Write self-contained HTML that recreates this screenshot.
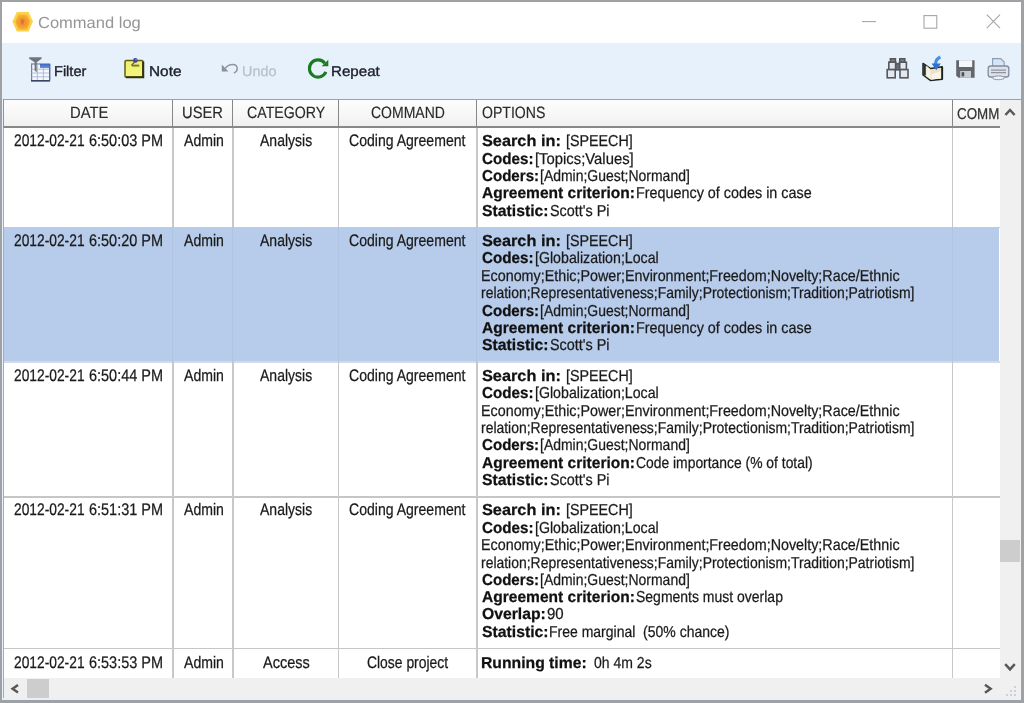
<!DOCTYPE html>
<html lang="en">
<head>
<meta charset="utf-8">
<title>Command log</title>
<style>
html,body{margin:0;padding:0;}
body{width:1024px;height:703px;overflow:hidden;background:#a0a1a5;font-family:"Liberation Sans",sans-serif;}
#win{position:absolute;left:0;top:0;width:1024px;height:703px;background:#a0a1a5;overflow:hidden;}
#inner{position:absolute;left:2.1px;top:1.8px;width:1019.4px;height:697.9px;background:#e7f1fb;}
#title{position:absolute;left:2.1px;top:1.8px;width:1019.4px;height:41px;background:#fff;}
#toolbar{position:absolute;left:2.1px;top:42.6px;width:1019.4px;height:57px;background:#e7f1fb;}
#grid{position:absolute;left:3px;top:98.6px;width:1017.6px;height:599px;background:#fff;}
#gridtop{position:absolute;left:3px;top:98.6px;width:1018.2px;height:1.8px;background:#97a1af;}
#gridleft{position:absolute;left:3px;top:98.6px;width:1.3px;height:599px;background:#a4acb8;}
#header{position:absolute;left:4.3px;top:100px;width:995.7px;height:26.7px;background:linear-gradient(#fdfdfd,#f7f7f7 55%,#efefef);}
#hline{position:absolute;left:4.3px;top:126.4px;width:995.7px;height:1.35px;background:#888;}
.hd{position:absolute;top:100px;width:1.2px;height:27px;background:#878787;}
.cd{position:absolute;top:127.8px;width:1.3px;height:550.6px;background:#c8c8c8;}
.rl{position:absolute;left:4.3px;width:995.7px;height:1.2px;background:#c6c6c6;}
#sel{position:absolute;left:4.3px;top:227.3px;width:994.5px;height:134.4px;background:#b7cbea;}
.sd{position:absolute;top:227.3px;width:1.1px;height:134.4px;background:#b1c4e1;}
#vsb{position:absolute;left:1000px;top:100.1px;width:20.7px;height:578.3px;background:#f0f0f0;}
#hsb{position:absolute;left:4.3px;top:678.4px;width:1016.4px;height:19.3px;background:#f0f0f0;}
#vth{position:absolute;left:1000.3px;top:540px;width:19.5px;height:22.4px;background:#cdcdcd;}
#hth{position:absolute;left:27.4px;top:679.2px;width:21.8px;height:18.4px;background:#cdcdcd;}
.t{position:absolute;white-space:pre;transform-origin:0 0;font-family:"Liberation Sans",sans-serif;-webkit-text-stroke:0.25px currentColor;text-rendering:geometricPrecision;}
.b{font-weight:bold;}
svg{position:absolute;overflow:visible;}
</style>
</head>
<body>
<div id="win">
<div id="inner"></div>
<div id="title"></div>
<div id="toolbar"></div>
<div id="grid"></div>
<div id="header"></div>
<div id="sel"></div>
<!-- row lines -->
<div class="rl" style="top:361.4px;background:#d5dbe6"></div>
<div class="rl" style="top:496.4px"></div>
<div class="rl" style="top:648.3px"></div>
<div class="rl" style="top:226.6px;background:#c4cad6"></div>
<!-- column dividers body -->
<div class="cd" style="left:172.4px"></div>
<div class="cd" style="left:232.4px"></div>
<div class="cd" style="left:337.6px"></div>
<div class="cd" style="left:476.4px"></div>
<div class="cd" style="left:952px"></div>
<div class="sd" style="left:172.4px"></div>
<div class="sd" style="left:232.4px"></div>
<div class="sd" style="left:337.6px"></div>
<div class="sd" style="left:476.4px"></div>
<div class="sd" style="left:952px"></div>
<div id="hline"></div>
<div class="hd" style="left:172.3px"></div>
<div class="hd" style="left:232.3px"></div>
<div class="hd" style="left:337.5px"></div>
<div class="hd" style="left:476.3px"></div>
<div class="hd" style="left:951.9px"></div>
<div id="vsb"></div>
<div id="hsb"></div>
<div id="vth"></div>
<div id="hth"></div>
<div id="gridtop"></div>
<div id="gridleft"></div>
<div class="hd" style="left:3px;top:99px;height:28.6px;width:1.3px;background:#8f9297"></div>
<svg width="1024" height="703" viewBox="0 0 1024 703" style="left:0;top:0">
<defs>
<radialGradient id="hexg" cx="0.5" cy="0.52" r="0.55">
<stop offset="0" stop-color="#ee8a3a"/><stop offset="0.5" stop-color="#f39c28"/><stop offset="0.85" stop-color="#f7b032"/><stop offset="1" stop-color="#f9bc3a"/>
</radialGradient>
<filter id="bl" x="-20%" y="-20%" width="140%" height="140%"><feGaussianBlur stdDeviation="0.45"/></filter>
<filter id="bl2" x="-20%" y="-20%" width="140%" height="140%"><feGaussianBlur stdDeviation="0.3"/></filter>
<linearGradient id="tblg" x1="0" y1="0" x2="0" y2="1"><stop offset="0" stop-color="#3d66c2"/><stop offset="1" stop-color="#6d93dc"/></linearGradient>
<linearGradient id="noteg" x1="0" y1="0" x2="0" y2="1"><stop offset="0" stop-color="#eeee6a"/><stop offset="1" stop-color="#f6f680"/></linearGradient>
</defs>
<!-- app icon -->
<polygon filter="url(#bl)" points="12.4,21.6 16.8,11.9 28.6,11.9 33,21.6 28.6,31.4 16.8,31.4" fill="#fcd24c"/>
<polygon filter="url(#bl)" points="15.2,21.7 18.2,14.4 27.2,14.4 30.2,21.7 27.2,29.6 18.2,29.6" fill="url(#hexg)"/>
<path filter="url(#bl)" d="M21.4 19.4L22.4 24.4L23.6 19.4" stroke="#e66a4a" stroke-width="1.6" fill="none"/>
<!-- window controls -->
<g stroke="#a6a6a6" stroke-width="1.1" fill="none">
<path d="M862 21.6H876"/>
<rect x="924" y="15.6" width="12.8" height="12.6"/>
<path d="M986.8 14.6L1000 28.2M1000 14.6L986.8 28.2"/>
</g>
<!-- filter icon -->
<g filter="url(#bl2)">
<rect x="31.6" y="64" width="18" height="16.6" fill="#f4f7fb" stroke="#6c7fa6" stroke-width="1.2"/>
<rect x="40" y="64" width="9.6" height="4" fill="url(#tblg)"/>
<path d="M31.6 69.2H49.6M31.6 73H49.6M31.6 76.8H49.6M37.4 64V80.6M43.4 68V80.6" stroke="#aab8d4" stroke-width="0.9" fill="none"/>
<path d="M31 80.8H50" stroke="#3a4766" stroke-width="1.6"/>
<path d="M49.7 64V80.6" stroke="#54689a" stroke-width="1.2"/>
<path d="M29.2 57.3H41.6V58.8L36.7 62.2V72.2L34.6 70.6V62.2L29.2 58.8Z" fill="#70747c"/>
</g>
<!-- note icon -->
<g filter="url(#bl2)">
<rect x="125" y="60.6" width="18" height="16.6" rx="1.2" fill="url(#noteg)" stroke="#5e5e1e" stroke-width="1.5"/>
<path d="M143.2 61.5V77.2H126" stroke="#30300e" stroke-width="2.1" fill="none"/>
<path d="M131.4 65.4L134.6 62.2" stroke="#50502a" stroke-width="1.2"/>
<path d="M132 65.6H139.2" stroke="#77773a" stroke-width="1.9"/>
<circle cx="135.4" cy="60.4" r="2.3" fill="#3e3c9c"/>
<circle cx="136" cy="59.8" r="0.8" fill="#9a98e0"/>
</g>
<!-- undo icon -->
<g filter="url(#bl2)">
<path d="M221.8 64.6V71.6H228.4Z" fill="#8b9098"/>
<path d="M225.4 68.2C227.5 65.6 230.2 64.6 232.6 64.6C235.6 64.6 237.2 66.4 237.2 68.6C237.2 70.8 235.8 72.4 233.8 73" fill="none" stroke="#9096a0" stroke-width="1.5"/>
</g>
<!-- repeat icon -->
<g filter="url(#bl2)">
<path d="M325.9 71.9A8.6 8.6 0 1 1 324.8 63.2" fill="none" stroke="#1f7a24" stroke-width="3.1"/>
<path d="M328.3 59.8V66.2H321.6Z" fill="#1f7a24"/>
</g>
<!-- binoculars -->
<g filter="url(#bl2)" stroke="#54585e" stroke-width="1.6" fill="#e4e8ee">
<rect x="890.4" y="58.8" width="5" height="3.6" fill="#7c8088"/>
<rect x="899.8" y="58.8" width="5" height="3.6" fill="#7c8088"/>
<rect x="888.8" y="62.2" width="7" height="7.4"/>
<rect x="899.4" y="62.2" width="7" height="7.4"/>
<rect x="887.2" y="69.6" width="8" height="8.2"/>
<rect x="900" y="69.6" width="8" height="8.2"/>
<rect x="895.6" y="63.8" width="4" height="6" fill="#6a6e76"/>
</g>
<!-- book with arrow -->
<g filter="url(#bl2)">
<path d="M923 63.4L930.6 68.6L942.2 66.8V79.2L930.4 80.4L923 75Z" fill="#e9dfc6" stroke="#1c2624" stroke-width="1.5" stroke-linejoin="round"/>
<path d="M923.2 63.6L925.8 64.2V75.6L923.2 74.8Z" fill="#2a3432"/>
<path d="M926.4 65.4L930.6 69.4V79.4L926.4 76.2Z" fill="#f6f1e2"/>
<path d="M931.4 69.8L941.2 68V78.2L931.4 79.4Z" fill="#efe2c4"/>
<path d="M931.4 74.5L941.2 71V78.2L931.4 79.4Z" fill="#f7f3ea"/>
<path d="M942.2 66.8V79.4" stroke="#16201e" stroke-width="1.8"/>
<path d="M940.4 57C937.6 58.2 935.6 60.6 935.4 64.2" fill="none" stroke="#4a8fe2" stroke-width="3.2"/>
<path d="M931.6 63.6H940.8L936.3 70.2Z" fill="#2f6fcf"/>
</g>
<!-- floppy -->
<g filter="url(#bl2)">
<path d="M956.2 60.2H974.6V77.8H958.4L956.2 75.6Z" fill="#62666c"/>
<rect x="959" y="60.2" width="13.2" height="6.8" fill="#f4f6fa"/>
<rect x="960.2" y="71" width="10.8" height="6.8" fill="#c9cbcf"/>
<rect x="961.6" y="72.2" width="2.6" height="4.2" fill="#4a4e54"/>
</g>
<!-- printer -->
<g filter="url(#bl2)">
<path d="M992.6 58.6H1000.6L1004.2 62V67H992.6Z" fill="#d3e6f8" stroke="#8e9cae" stroke-width="1.1"/>
<rect x="988.2" y="66" width="20.6" height="11" rx="2.6" fill="#dfe2e8" stroke="#808c9e" stroke-width="1.3"/>
<path d="M991 70.2H1006M991 72.6H1006" stroke="#8f959e" stroke-width="1.2"/>
<ellipse cx="998.5" cy="77.8" rx="6" ry="1.9" fill="#eef3fa" stroke="#8c97a8" stroke-width="1"/>
</g>
<!-- scroll arrows -->
<g fill="none" stroke="#585858" stroke-width="2.5" filter="url(#bl2)">
<path d="M1005.4 115L1010 110L1014.6 115"/>
<path d="M1005.2 664.2L1010 669.4L1014.8 664.2"/>
<path d="M18 685L12.6 688.8L18 692.6"/>
<path d="M985 684.8L990.6 688.8L985 692.8"/>
</g>
<!-- size grip -->
<g fill="#cfcfcf">
<rect x="1014" y="686" width="2" height="2"/>
<rect x="1010" y="690" width="2" height="2"/><rect x="1014" y="690" width="2" height="2"/>
<rect x="1006" y="694" width="2" height="2"/><rect x="1010" y="694" width="2" height="2"/><rect x="1014" y="694" width="2" height="2"/>
</g>
</svg>

<span class="t" style="left:69.59px;top:103px;font-size:16.4px;line-height:20px;color:#2a2a2a;transform:scaleX(0.9023);-webkit-text-stroke:0.15px #2a2a2a;">DATE</span>
<span class="t" style="left:182.26px;top:103px;font-size:16.4px;line-height:20px;color:#2a2a2a;transform:scaleX(0.8984);-webkit-text-stroke:0.15px #2a2a2a;">USER</span>
<span class="t" style="left:246.78px;top:103px;font-size:16.4px;line-height:20px;color:#2a2a2a;transform:scaleX(0.8647);-webkit-text-stroke:0.15px #2a2a2a;">CATEGORY</span>
<span class="t" style="left:371.19px;top:103px;font-size:16.4px;line-height:20px;color:#2a2a2a;transform:scaleX(0.8541);-webkit-text-stroke:0.15px #2a2a2a;">COMMAND</span>
<span class="t" style="left:481.83px;top:103px;font-size:16.4px;line-height:20px;color:#2a2a2a;transform:scaleX(0.8581);-webkit-text-stroke:0.15px #2a2a2a;">OPTIONS</span>
<span class="t" style="left:956.52px;top:105px;font-size:15.7px;line-height:20px;color:#333;transform:scaleX(0.8511);">COMM</span>
<span class="t" style="left:13.91px;top:131px;font-size:16.7px;line-height:20px;color:#1a1a1a;transform:scaleX(0.8266);">2012-02-21</span>
<span class="t" style="left:89.46px;top:131px;font-size:16.7px;line-height:20px;color:#1a1a1a;transform:scaleX(0.8672);">6:50:03 PM</span>
<span class="t" style="left:184.37px;top:131px;font-size:16.7px;line-height:20px;color:#1a1a1a;transform:scaleX(0.8442);">Admin</span>
<span class="t" style="left:259.97px;top:131px;font-size:16.7px;line-height:20px;color:#1a1a1a;transform:scaleX(0.8390);">Analysis</span>
<span class="t" style="left:349.29px;top:131px;font-size:16.7px;line-height:20px;color:#1a1a1a;transform:scaleX(0.8422);">Coding Agreement</span>
<span class="t" style="left:13.91px;top:231px;font-size:16.7px;line-height:20px;color:#1a1a1a;transform:scaleX(0.8266);">2012-02-21</span>
<span class="t" style="left:89.46px;top:231px;font-size:16.7px;line-height:20px;color:#1a1a1a;transform:scaleX(0.8672);">6:50:20 PM</span>
<span class="t" style="left:184.37px;top:231px;font-size:16.7px;line-height:20px;color:#1a1a1a;transform:scaleX(0.8442);">Admin</span>
<span class="t" style="left:259.97px;top:231px;font-size:16.7px;line-height:20px;color:#1a1a1a;transform:scaleX(0.8390);">Analysis</span>
<span class="t" style="left:349.29px;top:231px;font-size:16.7px;line-height:20px;color:#1a1a1a;transform:scaleX(0.8422);">Coding Agreement</span>
<span class="t" style="left:13.91px;top:366px;font-size:16.7px;line-height:20px;color:#1a1a1a;transform:scaleX(0.8266);">2012-02-21</span>
<span class="t" style="left:89.46px;top:366px;font-size:16.7px;line-height:20px;color:#1a1a1a;transform:scaleX(0.8672);">6:50:44 PM</span>
<span class="t" style="left:184.37px;top:366px;font-size:16.7px;line-height:20px;color:#1a1a1a;transform:scaleX(0.8442);">Admin</span>
<span class="t" style="left:259.97px;top:366px;font-size:16.7px;line-height:20px;color:#1a1a1a;transform:scaleX(0.8390);">Analysis</span>
<span class="t" style="left:349.29px;top:366px;font-size:16.7px;line-height:20px;color:#1a1a1a;transform:scaleX(0.8422);">Coding Agreement</span>
<span class="t" style="left:13.91px;top:500px;font-size:16.7px;line-height:20px;color:#1a1a1a;transform:scaleX(0.8266);">2012-02-21</span>
<span class="t" style="left:89.46px;top:500px;font-size:16.7px;line-height:20px;color:#1a1a1a;transform:scaleX(0.8672);">6:51:31 PM</span>
<span class="t" style="left:184.37px;top:500px;font-size:16.7px;line-height:20px;color:#1a1a1a;transform:scaleX(0.8442);">Admin</span>
<span class="t" style="left:259.97px;top:500px;font-size:16.7px;line-height:20px;color:#1a1a1a;transform:scaleX(0.8390);">Analysis</span>
<span class="t" style="left:349.29px;top:500px;font-size:16.7px;line-height:20px;color:#1a1a1a;transform:scaleX(0.8422);">Coding Agreement</span>
<span class="t" style="left:13.91px;top:653px;font-size:16.7px;line-height:20px;color:#1a1a1a;transform:scaleX(0.8266);">2012-02-21</span>
<span class="t" style="left:89.46px;top:653px;font-size:16.7px;line-height:20px;color:#1a1a1a;transform:scaleX(0.8672);">6:53:53 PM</span>
<span class="t" style="left:184.37px;top:653px;font-size:16.7px;line-height:20px;color:#1a1a1a;transform:scaleX(0.8442);">Admin</span>
<span class="t" style="left:263.07px;top:653px;font-size:16.7px;line-height:20px;color:#1a1a1a;transform:scaleX(0.8709);">Access</span>
<span class="t" style="left:367.09px;top:653px;font-size:16.7px;line-height:20px;color:#1a1a1a;transform:scaleX(0.8328);">Close project</span>
<span class="t b" style="left:481.93px;top:132px;font-size:15.8px;line-height:20px;color:#111;transform:scaleX(1.0320);">Search in:</span>
<span class="t" style="left:565.58px;top:132px;font-size:15.8px;line-height:20px;color:#1a1a1a;transform:scaleX(0.9049);">[SPEECH]</span>
<span class="t b" style="left:481.78px;top:150px;font-size:15.8px;line-height:20px;color:#111;transform:scaleX(0.9615);">Codes:</span>
<span class="t" style="left:534.54px;top:150px;font-size:15.8px;line-height:20px;color:#1a1a1a;transform:scaleX(0.9395);">[Topics;Values]</span>
<span class="t b" style="left:481.78px;top:167px;font-size:15.8px;line-height:20px;color:#111;transform:scaleX(0.9562);">Coders:</span>
<span class="t" style="left:540.20px;top:167px;font-size:15.8px;line-height:20px;color:#1a1a1a;transform:scaleX(0.8840);">[Admin;Guest;Normand]</span>
<span class="t b" style="left:482.01px;top:184px;font-size:15.8px;line-height:20px;color:#111;transform:scaleX(0.9846);">Agreement criterion:</span>
<span class="t" style="left:635.72px;top:184px;font-size:15.8px;line-height:20px;color:#1a1a1a;transform:scaleX(0.9093);">Frequency of codes in case</span>
<span class="t b" style="left:481.95px;top:202px;font-size:15.8px;line-height:20px;color:#111;transform:scaleX(0.9978);">Statistic:</span>
<span class="t" style="left:550.25px;top:202px;font-size:15.8px;line-height:20px;color:#1a1a1a;transform:scaleX(0.9107);">Scott's Pi</span>
<span class="t b" style="left:481.93px;top:232px;font-size:15.8px;line-height:20px;color:#111;transform:scaleX(1.0320);">Search in:</span>
<span class="t" style="left:565.58px;top:232px;font-size:15.8px;line-height:20px;color:#1a1a1a;transform:scaleX(0.9049);">[SPEECH]</span>
<span class="t b" style="left:481.78px;top:249px;font-size:15.8px;line-height:20px;color:#111;transform:scaleX(0.9615);">Codes:</span>
<span class="t" style="left:534.99px;top:249px;font-size:15.8px;line-height:20px;color:#1a1a1a;transform:scaleX(0.8973);">[Globalization;Local</span>
<span class="t" style="left:481.08px;top:267px;font-size:15.8px;line-height:20px;color:#1a1a1a;transform:scaleX(0.9063);">Economy;Ethic;Power;Environment;Freedom;Novelty;Race/Ethnic</span>
<span class="t" style="left:481.32px;top:284px;font-size:15.8px;line-height:20px;color:#1a1a1a;transform:scaleX(0.8826);">relation;Representativeness;Family;Protectionism;Tradition;Patriotism]</span>
<span class="t b" style="left:481.78px;top:302px;font-size:15.8px;line-height:20px;color:#111;transform:scaleX(0.9562);">Coders:</span>
<span class="t" style="left:540.20px;top:302px;font-size:15.8px;line-height:20px;color:#1a1a1a;transform:scaleX(0.8840);">[Admin;Guest;Normand]</span>
<span class="t b" style="left:482.01px;top:319px;font-size:15.8px;line-height:20px;color:#111;transform:scaleX(0.9846);">Agreement criterion:</span>
<span class="t" style="left:635.72px;top:319px;font-size:15.8px;line-height:20px;color:#1a1a1a;transform:scaleX(0.9093);">Frequency of codes in case</span>
<span class="t b" style="left:481.95px;top:336px;font-size:15.8px;line-height:20px;color:#111;transform:scaleX(0.9978);">Statistic:</span>
<span class="t" style="left:550.25px;top:336px;font-size:15.8px;line-height:20px;color:#1a1a1a;transform:scaleX(0.9107);">Scott's Pi</span>
<span class="t b" style="left:481.93px;top:367px;font-size:15.8px;line-height:20px;color:#111;transform:scaleX(1.0320);">Search in:</span>
<span class="t" style="left:565.58px;top:367px;font-size:15.8px;line-height:20px;color:#1a1a1a;transform:scaleX(0.9049);">[SPEECH]</span>
<span class="t b" style="left:481.78px;top:384px;font-size:15.8px;line-height:20px;color:#111;transform:scaleX(0.9615);">Codes:</span>
<span class="t" style="left:534.99px;top:384px;font-size:15.8px;line-height:20px;color:#1a1a1a;transform:scaleX(0.8973);">[Globalization;Local</span>
<span class="t" style="left:481.08px;top:402px;font-size:15.8px;line-height:20px;color:#1a1a1a;transform:scaleX(0.9063);">Economy;Ethic;Power;Environment;Freedom;Novelty;Race/Ethnic</span>
<span class="t" style="left:481.32px;top:419px;font-size:15.8px;line-height:20px;color:#1a1a1a;transform:scaleX(0.8826);">relation;Representativeness;Family;Protectionism;Tradition;Patriotism]</span>
<span class="t b" style="left:481.78px;top:436px;font-size:15.8px;line-height:20px;color:#111;transform:scaleX(0.9562);">Coders:</span>
<span class="t" style="left:540.20px;top:436px;font-size:15.8px;line-height:20px;color:#1a1a1a;transform:scaleX(0.8840);">[Admin;Guest;Normand]</span>
<span class="t b" style="left:482.01px;top:454px;font-size:15.8px;line-height:20px;color:#111;transform:scaleX(0.9846);">Agreement criterion:</span>
<span class="t" style="left:636.20px;top:454px;font-size:15.8px;line-height:20px;color:#1a1a1a;transform:scaleX(0.8786);">Code importance (% of total)</span>
<span class="t b" style="left:481.95px;top:471px;font-size:15.8px;line-height:20px;color:#111;transform:scaleX(0.9978);">Statistic:</span>
<span class="t" style="left:550.25px;top:471px;font-size:15.8px;line-height:20px;color:#1a1a1a;transform:scaleX(0.9107);">Scott's Pi</span>
<span class="t b" style="left:481.93px;top:501px;font-size:15.8px;line-height:20px;color:#111;transform:scaleX(1.0320);">Search in:</span>
<span class="t" style="left:565.58px;top:501px;font-size:15.8px;line-height:20px;color:#1a1a1a;transform:scaleX(0.9049);">[SPEECH]</span>
<span class="t b" style="left:481.78px;top:519px;font-size:15.8px;line-height:20px;color:#111;transform:scaleX(0.9615);">Codes:</span>
<span class="t" style="left:534.99px;top:519px;font-size:15.8px;line-height:20px;color:#1a1a1a;transform:scaleX(0.8973);">[Globalization;Local</span>
<span class="t" style="left:481.08px;top:536px;font-size:15.8px;line-height:20px;color:#1a1a1a;transform:scaleX(0.9063);">Economy;Ethic;Power;Environment;Freedom;Novelty;Race/Ethnic</span>
<span class="t" style="left:481.32px;top:554px;font-size:15.8px;line-height:20px;color:#1a1a1a;transform:scaleX(0.8826);">relation;Representativeness;Family;Protectionism;Tradition;Patriotism]</span>
<span class="t b" style="left:481.78px;top:571px;font-size:15.8px;line-height:20px;color:#111;transform:scaleX(0.9562);">Coders:</span>
<span class="t" style="left:540.20px;top:571px;font-size:15.8px;line-height:20px;color:#1a1a1a;transform:scaleX(0.8840);">[Admin;Guest;Normand]</span>
<span class="t b" style="left:482.01px;top:588px;font-size:15.8px;line-height:20px;color:#111;transform:scaleX(0.9846);">Agreement criterion:</span>
<span class="t" style="left:636.26px;top:588px;font-size:15.8px;line-height:20px;color:#1a1a1a;transform:scaleX(0.8853);">Segments must overlap</span>
<span class="t b" style="left:481.76px;top:605px;font-size:15.8px;line-height:20px;color:#111;transform:scaleX(0.9947);">Overlap:</span>
<span class="t" style="left:546.90px;top:605px;font-size:15.8px;line-height:20px;color:#1a1a1a;transform:scaleX(0.9494);">90</span>
<span class="t b" style="left:481.95px;top:623px;font-size:15.8px;line-height:20px;color:#111;transform:scaleX(0.9978);">Statistic:</span>
<span class="t" style="left:549.15px;top:623px;font-size:15.8px;line-height:20px;color:#1a1a1a;transform:scaleX(0.8857);">Free marginal  (50% chance)</span>
<span class="t b" style="left:481.35px;top:654px;font-size:15.8px;line-height:20px;color:#111;transform:scaleX(0.9951);">Running time:</span>
<span class="t" style="left:593.85px;top:654px;font-size:15.8px;line-height:20px;color:#1a1a1a;transform:scaleX(0.8872);">0h 4m 2s</span>
<span class="t" style="left:37.86px;top:14px;font-size:16px;line-height:20px;color:#959595;transform:scaleX(1.0321);-webkit-text-stroke:0;">Command log</span>
<span class="t" style="left:53.71px;top:62px;font-size:14.2px;line-height:20px;color:#20222c;transform:scaleX(1.0255);-webkit-text-stroke:0.35px #20222c;">Filter</span>
<span class="t" style="left:149.04px;top:62px;font-size:14.2px;line-height:20px;color:#20222c;transform:scaleX(1.0826);-webkit-text-stroke:0.35px #20222c;">Note</span>
<span class="t" style="left:242.39px;top:62px;font-size:14.2px;line-height:20px;color:#b7bfcb;transform:scaleX(1.0146);">Undo</span>
<span class="t" style="left:331.16px;top:62px;font-size:14.2px;line-height:20px;color:#20222c;transform:scaleX(1.0656);-webkit-text-stroke:0.35px #20222c;">Repeat</span>
</div>
</body>
</html>
